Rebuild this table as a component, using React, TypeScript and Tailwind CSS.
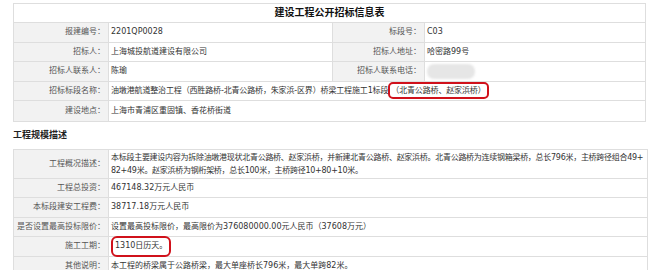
import React from 'react';

const font = { fontFamily: '"DejaVu Sans", "Noto Sans CJK SC", sans-serif' };

const Label = ({ children, w = 'w-[95px]' }: { children: React.ReactNode; w?: string }) => (
  <div className={`${w} shrink-0 bg-[#f2f2f2] border-r border-[#dedede] flex items-center justify-end pr-[3px] text-[#555]`}>
    {children}
  </div>
);

const Value = ({ children, className = '' }: { children: React.ReactNode; className?: string }) => (
  <div className={`flex items-center pl-[2px] text-[#333] ${className}`}>{children}</div>
);

const Highlight = ({ children }: { children: React.ReactNode }) => (
  <span className="inline-flex items-center h-[17px] px-[1px] border-2 border-[#d0111b] rounded-[5px]">
    {children}
  </span>
);

export default function App() {
  return (
    <div className="w-[660px] h-[270px] bg-white overflow-hidden text-[8px] leading-none" style={font}>
      {/* info table */}
      <div className="ml-[13px] mt-[3px] w-[633px] border border-[#dedede]">
        <div className="h-[19px] flex items-center justify-center border-b border-[#dedede] text-[10px] font-bold text-[#111]">
          建设工程公开招标信息表
        </div>
        <div className="h-[19.5px] flex border-b border-[#dedede]">
          <Label>报建编号：</Label>
          <Value className="w-[224px] border-r border-[#dedede]">2201QP0028</Value>
          <Label w="w-[92px]">标段号：</Label>
          <Value>C03</Value>
        </div>
        <div className="h-[19.5px] flex border-b border-[#dedede]">
          <Label>招标人：</Label>
          <Value className="w-[224px] border-r border-[#dedede]">上海城投航道建设有限公司</Value>
          <Label w="w-[92px]">招标人地址：</Label>
          <Value>哈密路99号</Value>
        </div>
        <div className="h-[19.5px] flex border-b border-[#dedede]">
          <Label>招标人联系人：</Label>
          <Value className="w-[224px] border-r border-[#dedede]">陈瑜</Value>
          <Label w="w-[92px]">招标人联系电话：</Label>
          <Value>
            <span className="block w-[48px] h-[15px] rounded-[7px] bg-[#e6e6e6] blur-[1px]" />
          </Value>
        </div>
        <div className="h-[19.5px] flex border-b border-[#dedede]">
          <Label>招标标段名称：</Label>
          <Value className="whitespace-nowrap tracking-[-0.15px]">
            油墩港航道整治工程（西胜路桥-北青公路桥，朱家浜-区界）桥梁工程施工1标段
            <Highlight>（北青公路桥、赵家浜桥）</Highlight>
          </Value>
        </div>
        <div className="h-[19.5px] flex">
          <Label>建设地点：</Label>
          <Value>上海市青浦区重固镇、香花桥街道</Value>
        </div>
      </div>

      {/* scale */}
      <div className="ml-[13px] mt-[6px] h-[16px] flex items-center text-[9px] font-bold text-[#222]">工程规模描述</div>
      <div className="ml-[13px] mt-[5px] w-[635px] border border-[#dedede]">
        <div className="h-[29px] flex border-b border-[#dedede]">
          <Label>工程概况描述：</Label>
          <div className="flex flex-col justify-center pl-[2px] text-[#333] whitespace-nowrap text-[8px] tracking-[-0.28px] leading-[13px]">
            <span>本标段主要建设内容为拆除油墩港现状北青公路桥、赵家浜桥，并新建北青公路桥、赵家浜桥。北青公路桥为连续钢箱梁桥，总长796米，主桥跨径组合49+</span>
            <span>82+49米。赵家浜桥为钢桁架桥，总长100米，主桥跨径10+80+10米。</span>
          </div>
        </div>
        <div className="h-[19.5px] flex border-b border-[#dedede]">
          <Label>工程总投资：</Label>
          <Value>467148.32万元人民币</Value>
        </div>
        <div className="h-[19.5px] flex border-b border-[#dedede]">
          <Label>本标段建安工程费：</Label>
          <Value>38717.18万元人民币</Value>
        </div>
        <div className="h-[19.5px] flex border-b border-[#dedede]">
          <Label>是否设置最高投标限价：</Label>
          <Value>设置最高投标限价，最高限价为376080000.00元人民币（37608万元）</Value>
        </div>
        <div className="h-[19.5px] flex border-b border-[#dedede]">
          <Label>施工工期：</Label>
          <Value className="pl-0">
            <span className="inline-flex items-center h-[21px] px-[2px] border-2 border-[#d0111b] rounded-[6px]">1310日历天。</span>
          </Value>
        </div>
        <div className="h-[19.5px] flex">
          <Label>其他说明：</Label>
          <Value>本工程的桥梁属于公路桥梁，最大单座桥长796米，最大单跨82米。</Value>
        </div>
      </div>
    </div>
  );
}
